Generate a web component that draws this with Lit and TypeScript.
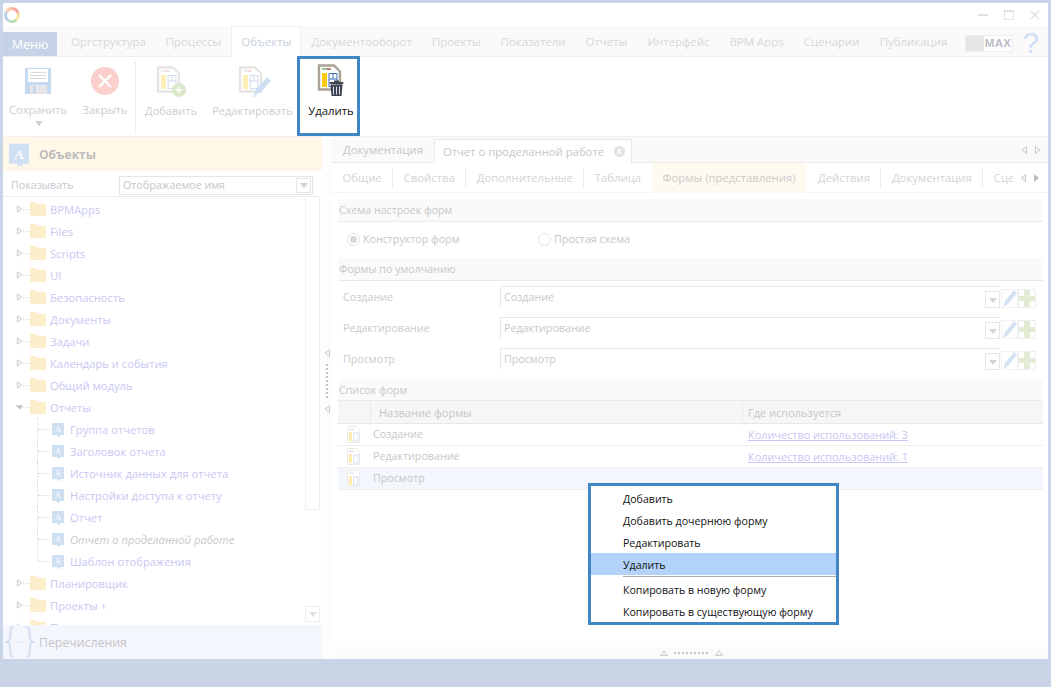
import { LitElement, html, css, svg } from "lit";
import { customElement } from "lit/decorators.js";

const doc = (strong: boolean, extra: unknown, w = 34, h = 34) => {
  const g = strong ? "#a8a396" : "#e6e5e0";
  const y = strong ? "#ffcc11" : "#fdf0b8";
  const b = strong ? "#3f6fb5" : "#cfdcf0";
  return html`<svg width=${w} height=${h} viewBox="0 0 34 34">
    <path d="M2 1.500H17L23 7.500V25.500H2Z" fill="#fff" stroke=${g} stroke-width="2.400"/>
    <rect x="5" y="4" width="9" height="2" fill=${strong ? "#8fc08f" : "#eee"}/>
    <rect x="10" y="4" width="3" height="2" fill=${strong ? "#e07070" : "#f6d8d8"}/>
    <rect x="5" y="9" width="5" height="14" fill=${y}/>
    <path d="M12 9.500h8v13h-8zM12 15h8M16 9.500v5.500" fill="none" stroke=${b} stroke-width="1"/>
    ${extra}
  </svg>`;
};

const trash = svg`<g fill="#3c4452"><rect x="12.500" y="18" width="14" height="2" rx="1"/><rect x="17" y="16.500" width="5" height="2"/><path d="M13.500 20.500h12l-1 11.500h-10z"/></g><path d="M16.500 22.500v8M19.500 22.500v8M22.500 22.500v8" stroke="#dde" stroke-width="1"/>`;
const plusC = svg`<circle cx="23" cy="24" r="7" fill="#d9e7cb"/><path d="M23 20.500v7M19.500 24h7" stroke="#fff" stroke-width="1.600"/>`;
const pencil = svg`<path d="M16 29l2-6L29 11l4 4L22 27z" fill="#cfdff2"/><path d="M15 32l1-5 4 3z" fill="#dfe8f4"/>`;

const floppy = html`<svg width="26" height="26" viewBox="0 0 26 26"><rect width="26" height="26" fill="#c3daf0"/><rect x="3" y="1" width="20" height="13" fill="#fff"/><path d="M5 4.500h16M5 7.500h16M5 10.500h16" stroke="#d8d8d8"/><rect x="5" y="17" width="17" height="9" fill="#e6e6e8"/><rect x="8" y="18" width="3" height="8" fill="#c3daf0"/></svg>`;
const closeI = html`<svg width="28" height="28" viewBox="0 0 28 28"><circle cx="14" cy="14" r="14" fill="#fbd0cc"/><path d="M8 8l12 12M20 8L8 20" stroke="#fff" stroke-width="2.400"/></svg>`;

const folder = html`<svg class="fold" width="16" height="14" viewBox="0 0 16 14"><path d="M0 0h6l2 2h8v12H0z" fill="#fdeecb"/></svg>`;
const book = (s = 12, h = 15) => html`<svg width=${s} height=${h} viewBox="0 0 12 15"><path d="M0 1h12v12H8v2l-1.500-1L5 15v-2H0z" fill="#cfe0f2"/><text x="6" y="10" font-size="8" fill="#fff" text-anchor="middle" font-family="Liberation Serif">A</text></svg>`;
const formIcon = html`<svg width="13" height="17" viewBox="0 0 13 17"><path d="M.5.500H9L12.500 4V16.500H.5z" fill="#fff" stroke="#ecebe6"/><rect x="2" y="6" width="3" height="9" fill="#fdeeb0"/><rect x="2" y="2.500" width="5" height="1.500" fill="#e6e6e6"/><rect x="6.500" y="7" width="4.500" height="8" fill="none" stroke="#d6e0f0"/></svg>`;
const pen = html`<svg width="17" height="19" viewBox="0 0 17 19"><path d="M.5.500h16v18H.5z" fill="none" stroke="#f2f2f2"/><path d="M2 18l2-6L13 1l3 3L7 15z" fill="#d4e2f3"/></svg>`;
const plus = html`<svg width="18" height="19" viewBox="0 0 18 19"><path d="M6 1h6v6h5v5h-5v6H6v-6H1V7h5z" fill="#e0edd4"/><path d="M.5.500h17v18H.5z" fill="none" stroke="#eee"/></svg>`;
const arrow = (d: string, c = "#d2d2d2") => {
  const p: Record<string, string> = { l: "M7 1v8L2 5z", r: "M2 1v8l5-4z", u: "M1 7h8L5 2z", d: "M1 3h8L5 8z" };
  return html`<svg width="9" height="10" viewBox="0 0 9 10"><path d=${p[d]} fill=${c}/></svg>`;
};
const hollow = (d: string, c = "#cccccc") => {
  const p: Record<string, string> = { l: "M6.500 1.500v7L2 5z", r: "M2.500 1.500v7L7 5z", u: "M1.500 7.500h7L5 2.500z" };
  return html`<svg width="9" height="10" viewBox="0 0 9 10"><path d=${p[d]} fill="#f4f4f4" stroke=${c}/></svg>`;
};

const roots1 = ["BPMApps", "Files", "Scripts", "UI", "Безопасность", "Документы", "Задачи", "Календарь и события", "Общий модуль"];
const kids = ["Группа отчетов", "Заголовок отчета", "Источник данных для отчета", "Настройки доступа к отчету", "Отчет", "Отчет о проделанной работе", "Шаблон отображения"];
const roots2 = ["Планировщик", "Проекты +", "Процессы"];
const tabs = ["Оргструктура", "Процессы", "Объекты", "Документооборот", "Проекты", "Показатели", "Отчеты", "Интерфейс", "BPM Apps", "Сценарии", "Публикация"];
const subs = ["Общие", "Свойства", "Дополнительные", "Таблица", "Формы (представления)", "Действия", "Документация", "Сценарии"];

@customElement("app-root")
export class AppRoot extends LitElement {
  static styles = css`
    :host { display: block; width: 1051px; height: 687px; background: #c9d5e6; overflow: hidden; position: relative;
      font-family: "Open Sans", "Noto Sans", sans-serif; font-size: 11.200px; color: #c6c6c6; }
    * { box-sizing: border-box; }
    .win { margin: 3px 3px 0; height: 656px; background: #fff; display: flex; flex-direction: column; }
    .title { height: 23px; flex: none; display: flex; align-items: center; padding: 0 8px 0 1px; }
    .ctrl { margin-left: auto; display: flex; gap: 16px; align-items: center; }
    .rtabs { height: 31px; flex: none; background: #fafafa; border-bottom: 1px solid #eee; display: flex; align-items: flex-end; padding-right: 9px; }
    .menu { flex: none; width: 54px; height: 24px; background: #c6d3e6; color: #fff; font-size: 12.500px; display: flex; align-items: center; justify-content: center; margin-right: 4px; }
    .rt { padding: 0 10px; height: 30px; line-height: 30px; color: #d8d8d8; white-space: nowrap; margin-bottom: -1px; font-size: 11.450px; }
    .rt.on { background: #fff; border: 1px solid #eee; border-bottom: 0; height: 31px; color: #c9d1e0; padding: 0 9px; }
    .maxb { flex: none; margin-left: auto; margin-bottom: 4px; width: 48px; height: 17px; display: flex; border: 1px solid #eee; background: #fff; }
    .maxb i { width: 18px; background: #e6e6e6; }
    .maxb b { font-size: 11.500px; line-height: 15px; color: #b9bcc4; letter-spacing: .2px; padding-left: 1px; font-family: "Liberation Sans", sans-serif; }
    .q { flex: none; margin-left: 10px; margin-bottom: -2px; font-size: 29px; line-height: 30px; color: #cfdff2; font-family: "Liberation Sans", sans-serif; }
    .ribbon { height: 79px; flex: none; display: flex; background: #fff; font-size: 11px; }
    .rb { display: flex; flex-direction: column; align-items: center; color: #cdcdcd; white-space: nowrap; }
    .rb .ic { height: 36px; display: flex; align-items: center; margin-top: 6px; margin-bottom: 3px; }
    .save { margin-left: 6px; width: 58px; }
    .close { margin-left: 15px; width: 46px; }
    .sepv { width: 1px; height: 73px; background: #efefef; margin: 4px 9px 0 7px; }
    .add { width: 52px; }
    .edit { margin-left: 15px; width: 81px; }
    .add .ic, .edit .ic { margin-top: 8px; margin-left: 4px; margin-bottom: 2px; }
    .del { margin-left: 4px; width: 63px; height: 80px; margin-top: -1px; border: 3px solid #3f88c5; color: #111; position: relative; z-index: 1; padding-left: 5px; font-size: 11.300px; }
    .del .ic { margin-top: 4px; margin-bottom: 4px; margin-left: 6px; }
    .caret { margin-top: -1px; }
    .main { flex: 1; min-height: 0; display: flex; border-top: 1px solid #f0f0f0; }
    .left { width: 319px; flex: none; display: flex; flex-direction: column; }
    .lh { height: 34px; flex: none; background: #fff8e8; display: flex; align-items: center; font-weight: 700; font-size: 12px; color: #bdbdbd; gap: 10px; padding-left: 6px; }
    .show { height: 26px; flex: none; display: flex; align-items: center; padding: 3px 0 0 8px; border-bottom: 1px solid #eee; font-size: 10.700px; }
    .show span { width: 108px; color: #cbc6cf; }
    .combo { width: 194px; height: 19px; border: 1px solid #e6e6e6; display: flex; align-items: center; padding-left: 3px; justify-content: space-between; }
    .cb { width: 15px; height: 15px; border: 1px solid #e8e8e8; display: flex; align-items: center; justify-content: center; margin-right: 1px; }
    .treewrap { flex: 1; min-height: 0; display: flex; overflow: hidden; margin-top: 1px; }
    .tree { flex: 1; overflow: hidden; }
    .row { height: 22px; display: flex; align-items: center; color: #c9c7f3; white-space: nowrap; position: relative; }
    .exp { width: 27px; padding-left: 12px; flex: none; display: flex; align-items: center; }
    .exp u { width: 7px; border-top: 1px dotted #d8d8d8; }
    .fold { margin-right: 4px; }
    .kid { padding-left: 34px; }
    .conn { width: 15px; flex: none; align-self: stretch; border-left: 1px dotted #d8d8d8; position: relative; }
    .conn::after { content: ""; position: absolute; left: 0; top: 11px; width: 12px; border-top: 1px dotted #d8d8d8; }
    .kid.last .conn { height: 11px; align-self: flex-start; }
    .kid svg { margin-right: 6px; }
    .kid.cur { font-style: italic; color: #c8c8c8; }
    .sb { width: 17px; flex: none; display: flex; flex-direction: column; justify-content: space-between; padding: 0 2px 3px 0; }
    .sb .t { height: 312px; border: 1px solid #efefef; border-top: 0; }
    .sb .b { height: 16px; border: 1px solid #eee; display: flex; align-items: center; justify-content: center; }
    .enum { height: 34px; flex: none; background: #f3f6fc; display: flex; align-items: center; font-size: 12.300px; color: #c8c4c8; gap: 2px; }
    .split { width: 10px; flex: none; background: #fdfdfd; display: flex; flex-direction: column; align-items: center; justify-content: center; gap: 6px; padding-bottom: 35px; }
    .dots { width: 2px; height: 34px; border-left: 2px dotted #c4c4c4; }
    .right { flex: 1; min-width: 0; display: flex; flex-direction: column; position: relative; }
    .dt { height: 26px; flex: none; background: #fafafa; border-bottom: 1px solid #eaeaea; display: flex; align-items: flex-end; padding-left: 1px; font-size: 11.300px; }
    .dt > span { padding: 0 10px; height: 23px; line-height: 22px; white-space: nowrap; }
    .dt .on { background: #fff; border: 1px solid #e8e8e8; border-bottom: 0; width: 198px; display: flex; align-items: center; justify-content: space-between; padding: 0 6px 0 8px; margin-left: 1px; margin-bottom: -1px; height: 24px; white-space: nowrap; }
    .x { width: 11px; height: 11px; border-radius: 50%; background: #e2e2e2; color: #fff; font-size: 9px; line-height: 10px; text-align: center; font-weight: 700; }
    .navs { margin-left: auto; display: flex; gap: 4px; padding: 0 6px 7px 0; }
    .st { height: 30px; flex: none; display: flex; align-items: center; border-bottom: 1px solid #f4f4f4; color: #d4d4d4; font-size: 11.300px; }
    .sc { width: 681px; height: 30px; display: flex; align-items: center; overflow: hidden; flex: none; }
    .sc span { padding: 0 10.500px; height: 20px; line-height: 20px; border-right: 1px solid #eee; white-space: nowrap; flex: none; }
    .sc span.on { background: #fefaf0; height: 30px; line-height: 30px; color: #cbcbcb; border: 0; padding: 0 11px; margin: 0 1px 0 0; }
    .sc span.pre { border: 0; }
    .sc span:last-child { border: 0; }
    .navs2 { margin-left: 6px; display: flex; gap: 4px; }
    .body { padding: 6px 5px 0 6px; flex: 1; min-height: 0; font-size: 10.700px; }
    .sh { height: 23px; background: #fafafa; border-bottom: 1px solid #eaeaea; line-height: 23px; color: #c8c8c8; padding-left: 1px; }
    .radios { height: 36px; display: flex; align-items: center; padding: 0 0 2px 9px; }
    .radio { width: 13px; height: 13px; border-radius: 50%; border: 1px solid #e4e4e4; margin-right: 3px; display: flex; align-items: center; justify-content: center; flex: none; }
    .radio i { width: 7px; height: 7px; border-radius: 50%; background: #d8d8d8; }
    .rlab { width: 175px; color: #c8c8c8; }
    .frs { padding-top: 5px; }
    .fr { height: 31px; display: flex; align-items: flex-start; padding-left: 5px; }
    .fr label { width: 157px; padding-top: 4px; color: #cfc8cf; }
    .inp { width: 500px; height: 21px; border-top: 1px solid #e8e8e8; border-left: 1px solid #e8e8e8; display: flex; justify-content: space-between; padding-left: 3px; color: #c8c8c8; line-height: 20px; }
    .inp .cb { margin: 4px 0 0; height: 17px; flex: none; border-color: #e6e6e6; }
    .tools { display: flex; padding-top: 3px; padding-left: 1px; }
    .sh.short { height: 22px; }
    .th { height: 23px; background: #f6f6f6; border-bottom: 1px solid #e8e8e8; display: grid; grid-template-columns: 32px 372px 1fr; line-height: 24px; color: #c6c6c6; font-size: 11px; }
    .th span { padding-left: 8px; border-left: 1px solid #eaeaea; }
    .th span:first-child { border: 0; }
    .th span:last-child { padding-left: 5px; }
    .tr { height: 22px; border-bottom: 1px solid #eee; display: grid; grid-template-columns: 35px 369px 1fr; align-items: center; color: #c8c8c8; padding-bottom: 1px; }
    .tr .i { padding-left: 9px; display: flex; align-items: center; }
    .tr .l { color: #c9c5f4; text-decoration: underline; padding-left: 6px; font-size: 10.900px; }
    .tr.sel { background: #f3f6fc; }
    .bot { height: 12px; flex: none; background: #fbfbfb; display: flex; align-items: center; justify-content: center; gap: 6px; margin-left: 1px; }
    .bot u { width: 34px; border-top: 2px dotted #c4c4c4; text-decoration: none; }
    .ctx { position: absolute; left: 256px; top: 346px; width: 251px; height: 142px; border: 3px solid #3f88c5; background: #fff; color: #111; font-size: 10.600px; padding-top: 1px; z-index: 2; }
    .ctx div { height: 22px; line-height: 24px; padding-left: 32px; white-space: nowrap; }
    .ctx .low { line-height: 22px; }
    .ctx .hl { background: #b3d3fb; }
    .ctx hr { border: 0; height: 1px; background: #aaa; margin: 1px 0 2px 32px; }
  `;

  render() {
    return html`<div class="win">
      <div class="title">
        <svg width="16" height="16" viewBox="0 0 16 16" fill="none" stroke-width="3">
          <path d="M2.500 5A6.500 6.500 0 0 1 8 1.500" stroke="#f8c8a8"/><path d="M8 1.500A6.500 6.500 0 0 1 14 6" stroke="#f4a8a0"/>
          <path d="M14 6A6.500 6.500 0 0 1 12 13" stroke="#f8e4a0"/><path d="M12 13A6.500 6.500 0 0 1 5 14" stroke="#b8e0b0"/><path d="M5 14A6.500 6.500 0 0 1 2.500 5" stroke="#b8d0f0"/>
        </svg>
        <div class="ctrl">
          <svg width="10" height="2" viewBox="0 0 10 2"><rect width="10" height="2" fill="#e2e2e2"/></svg>
          <svg width="10" height="10" viewBox="0 0 10 10"><path d="M.5 1.500h9v8h-9z" fill="none" stroke="#e2e2e2"/><rect width="10" height="2" fill="#e2e2e2"/></svg>
          <svg width="10" height="10" viewBox="0 0 10 10"><path d="M1 1l8 8M9 1L1 9" stroke="#e2e2e2" stroke-width="1.600"/></svg>
        </div>
      </div>
      <div class="rtabs">
        <div class="menu">Меню</div>
        ${tabs.map(t => html`<div class="rt ${t === "Объекты" ? "on" : ""}">${t}</div>`)}
        <div class="maxb"><i></i><b>MAX</b></div>
        <div class="q">?</div>
      </div>
      <div class="ribbon">
        <div class="rb save"><div class="ic">${floppy}</div>Сохранить<span class="caret">${arrow("d", "#cfcfcf")}</span></div>
        <div class="rb close"><div class="ic">${closeI}</div>Закрыть</div>
        <div class="sepv"></div>
        <div class="rb add"><div class="ic">${doc(false, plusC)}</div>Добавить</div>
        <div class="rb edit"><div class="ic">${doc(false, pencil)}</div>Редактировать</div>
        <div class="rb del"><div class="ic">${doc(true, trash)}</div>Удалить</div>
      </div>
      <div class="main">
        <div class="left">
          <div class="lh">${book(20, 27)}<span>Объекты</span></div>
          <div class="show"><span>Показывать</span><div class="combo">Отображаемое имя<div class="cb">${arrow("d")}</div></div></div>
          <div class="treewrap">
            <div class="tree">
              ${roots1.map(r => this.root(r, "r"))}
              ${this.root("Отчеты", "d")}
              ${kids.map((k, i) => html`<div class="row kid ${i === 5 ? "cur" : ""} ${i === 6 ? "last" : ""}"><div class="conn"></div>${book()}${k}</div>`)}
              ${roots2.map(r => this.root(r, "r"))}
            </div>
            <div class="sb"><div class="t"></div><div class="b">${arrow("d", "#e0e0e0")}</div></div>
          </div>
          <div class="enum">
            <svg width="34" height="34" viewBox="0 0 34 34" fill="none" stroke="#d3dfef" stroke-width="2"><path d="M11 2C6 2 8 8 7 13c0 3-3 4-3 4s3 1 3 4c1 5-1 11 4 11M23 2c5 0 3 6 4 11 0 3 3 4 3 4s-3 1-3 4c-1 5 1 11-4 11"/><path d="M9 17h16" stroke-width="1" stroke-dasharray="2 1.500"/></svg>
            <span>Перечисления</span>
          </div>
        </div>
        <div class="split">${hollow("l")}<div class="dots"></div>${hollow("l")}</div>
        <div class="right">
          <div class="dt"><span>Документация</span><div class="on"><span>Отчет о проделанной работе</span><div class="x">x</div></div>
            <div class="navs">${hollow("l")}${hollow("r")}</div></div>
          <div class="st">
            <div class="sc">${subs.map((s, i) => html`<span class="${i === 4 ? "on" : i === 3 ? "pre" : ""}">${s}</span>`)}</div>
            <div class="navs2">${hollow("l")}${arrow("r", "#bdbdbd")}</div>
          </div>
          <div class="body">
            <div class="sh">Схема настроек форм</div>
            <div class="radios"><div class="radio"><i></i></div><div class="rlab">Конструктор форм</div><div class="radio"></div><span>Простая схема</span></div>
            <div class="sh">Формы по умолчанию</div>
            <div class="frs">
            ${["Создание", "Редактирование", "Просмотр"].map(s => html`<div class="fr"><label>${s}</label><div class="inp">${s}<div class="cb">${arrow("d")}</div></div><div class="tools">${pen}${plus}</div></div>`)}
            </div>
            <div class="sh short">Список форм</div>
            <div class="th"><span></span><span>Название формы</span><span>Где используется</span></div>
            <div class="tr"><div class="i">${formIcon}</div><span>Создание</span><span class="l">Количество использований: 3</span></div>
            <div class="tr"><div class="i">${formIcon}</div><span>Редактирование</span><span class="l">Количество использований: 1</span></div>
            <div class="tr sel"><div class="i">${formIcon}</div><span>Просмотр</span><span></span></div>
          </div>
          <div class="bot">${hollow("u")}<u></u>${hollow("u")}</div>
          <div class="ctx">
            <div>Добавить</div><div>Добавить дочернюю форму</div><div>Редактировать</div><div class="hl">Удалить</div><hr />
            <div class="low">Копировать в новую форму</div><div class="low">Копировать в существующую форму</div>
          </div>
        </div>
      </div>
    </div>`;
  }

  root(name: string, dir: string) {
    return html`<div class="row"><div class="exp">${dir === "d" ? arrow("d", "#c4c4c4") : hollow("r")}<u></u></div>${folder}${name}</div>`;
  }
}
